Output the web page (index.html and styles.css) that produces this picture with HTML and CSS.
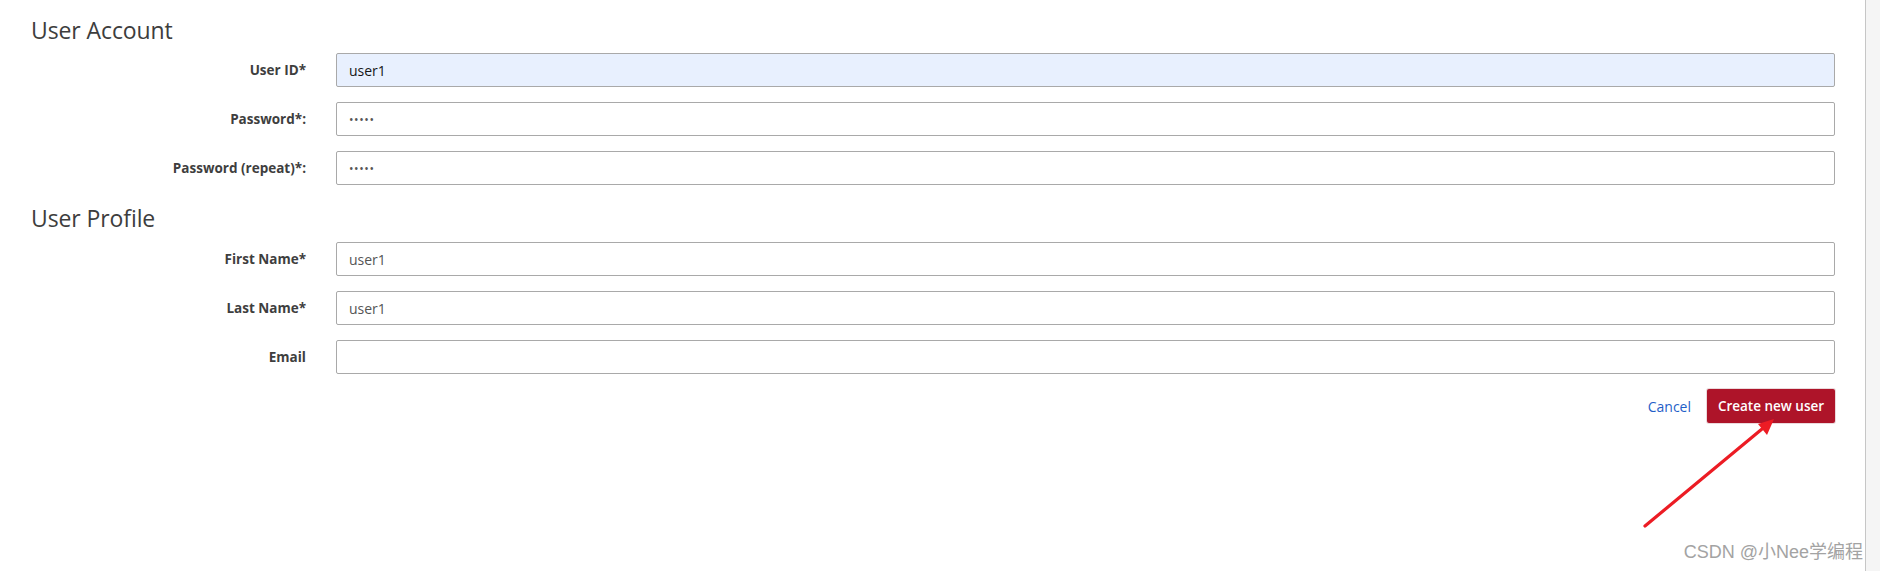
FILE: index.html
```html
<!DOCTYPE html>
<html>
<head>
<meta charset="utf-8">
<link rel="stylesheet" href="styles.css">
</head>
<body>
<div class="page">
  <main class="main">
    <section class="section section-account">
      <h2 class="heading">User Account</h2>
      <div class="form">
        <label class="label" for="uid">User ID*</label>
        <input class="field field-autofill" id="uid" type="text" value="user1">
        <label class="label" for="pw">Password*:</label>
        <input class="field field-pw" id="pw" type="password" value="user1">
        <label class="label" for="pw2">Password (repeat)*:</label>
        <input class="field field-pw" id="pw2" type="password" value="user1">
      </div>
    </section>
    <section class="section section-profile">
      <h2 class="heading">User Profile</h2>
      <div class="form">
        <label class="label" for="fn">First Name*</label>
        <input class="field" id="fn" type="text" value="user1">
        <label class="label" for="ln">Last Name*</label>
        <input class="field" id="ln" type="text" value="user1">
        <label class="label" for="em">Email</label>
        <input class="field" id="em" type="text" value="">
      </div>
    </section>
    <div class="actions">
      <a class="cancel" href="#">Cancel</a>
      <button class="primary" type="button">Create new user</button>
    </div>
  </main>
  <div class="scrollbar"></div>
</div>
<svg class="arrow" width="1880" height="571" viewBox="0 0 1880 571">
  <line x1="1645" y1="526" x2="1762" y2="429" stroke="#ec1c24" stroke-width="3.2" stroke-linecap="round"/>
  <polygon points="1774,419 1758,424 1767,435" fill="#ec1c24"/>
</svg>
<div class="watermark">CSDN @小Nee学编程</div>
</body>
</html>
```
FILE: styles.css
```css
html, body {
  margin: 0;
  padding: 0;
  background: #ffffff;
}
body {
  font-family: "Open Sans", "Noto Sans", sans-serif;
  width: 1880px;
  height: 571px;
  overflow: hidden;
  position: relative;
}
.page {
  display: flex;
  height: 571px;
}
.main {
  flex: 1;
  padding: 0 30px 0 31px;
}
.scrollbar {
  width: 14px;
  border-left: 1px solid #c6c6c6;
  background: #f5f5f5;
}
.heading {
  margin: 0;
  font-size: 23px;
  line-height: 30px;
  font-weight: 400;
  color: #3d3d3d;
  letter-spacing: -0.1px;
}
.section-account {
  padding-top: 15px;
}
.section-account .heading {
  margin-bottom: 8px;
}
.section-profile .heading {
  margin-top: 18px;
  margin-bottom: 9px;
}
.form {
  display: grid;
  grid-template-columns: 275px 1fr;
  column-gap: 30px;
  row-gap: 15px;
  align-items: center;
}
.label {
  text-align: right;
  font-size: 13.5px;
  font-weight: 700;
  color: #3e3e3e;
}
.field {
  box-sizing: border-box;
  height: 34px;
  width: 100%;
  margin: 0;
  border: 1px solid #a9a9a9;
  border-radius: 2px;
  padding: 0 12px;
  font-family: "Open Sans", "Noto Sans", sans-serif;
  font-size: 14px;
  color: #555555;
  background: #ffffff;
  outline: none;
}
.field-autofill {
  background: #e8f0fe;
  color: #161616;
}
.field-pw {
  font-size: 12px;
  letter-spacing: 0.6px;
  color: #555555;
}
.actions {
  display: flex;
  justify-content: flex-end;
  align-items: center;
  gap: 16px;
  margin-top: 15px;
}
.cancel {
  font-size: 14px;
  color: #1f5fc8;
  text-decoration: none;
}
.primary {
  box-sizing: border-box;
  height: 34px;
  width: 128px;
  border: none;
  border-radius: 2px;
  background: #ae1429;
  color: #ffffff;
  font-family: "Open Sans", "Noto Sans", sans-serif;
  font-size: 13.5px;
  font-weight: 600;
  padding: 0;
  box-shadow: 0 0 0 1px rgba(120, 0, 20, 0.15);
}
.arrow {
  position: absolute;
  left: 0;
  top: 0;
  pointer-events: none;
}
.watermark {
  position: absolute;
  right: 17px;
  bottom: 8px;
  font-family: "Liberation Sans", "Noto Sans CJK SC", sans-serif;
  font-size: 18px;
  color: #a3a3a3;
  text-shadow: 1px 1px 1px rgba(255, 255, 255, 0.9);
  white-space: nowrap;
}
```
